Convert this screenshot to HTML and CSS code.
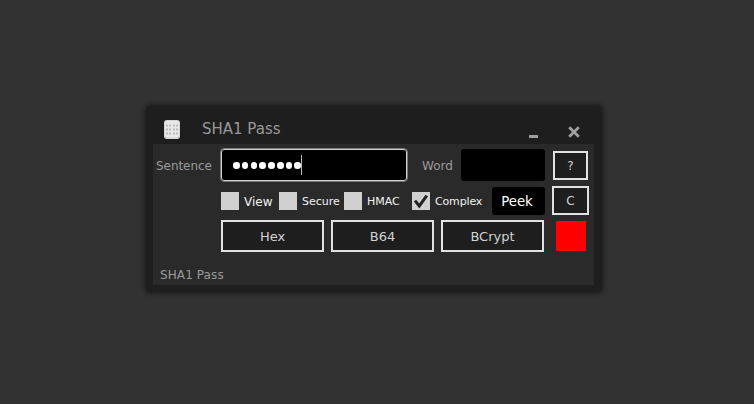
FILE: index.html
```
<!DOCTYPE html>
<html lang="en">
<head>
<meta charset="utf-8">
<title>SHA1 Pass</title>
<link rel="stylesheet" href="styles.css">
</head>
<body>
<main class="window">
  <header class="titlebar">
    <svg class="logo" width="16" height="19" viewBox="0 0 16 19">
      <rect x="0" y="0" width="16" height="19" rx="3" fill="#d4d4d4"/>
      <rect x="1" y="1" width="14" height="16.5" rx="2" fill="#e8e8e8"/>
      <path d="M2 5.5h5M9 5.5h5M2 9.5h5M9 9.5h5M2 13.5h5M9 13.5h5" stroke="#bcbcbc" stroke-width="2" stroke-dasharray="2 1"/>
    </svg>
    <h1 class="title"><span>SHA1 Pass</span></h1>
    <svg class="minimize" width="9" height="3" viewBox="0 0 9 3"><rect width="9" height="3" rx=".5" fill="#a0a0a0"/></svg>
    <svg class="close" width="12" height="12" viewBox="0 0 12 12"><path d="M1.2 1.2l9.6 9.6M10.8 1.2L1.2 10.8" stroke="#a0a0a0" stroke-width="2.7"/></svg>
  </header>
  <section class="content">
    <div class="row row-fields">
      <label class="label sentence-label"><span>Sentence</span></label>
      <div class="sentence">
        <span class="dots"><i></i><i></i><i></i><i></i><i></i><i></i><i></i><i></i></span><span class="caret"></span>
      </div>
      <label class="label word-label"><span>Word</span></label>
      <div class="word"></div>
      <button class="button help">?</button>
    </div>
    <div class="row row-options">
      <label class="option view"><span class="box"></span><span class="name">View</span></label>
      <label class="option secure"><span class="box"></span><span class="name">Secure</span></label>
      <label class="option hmac"><span class="box"></span><span class="name">HMAC</span></label>
      <label class="option complex"><span class="box"><svg width="18" height="18" viewBox="0 0 18 18"><path d="M3 8.6L7.3 14L14.8 3.6" fill="none" stroke="#222" stroke-width="3"/></svg></span><span class="name">Complex</span></label>
      <button class="peek"><span>Peek</span></button>
      <button class="button clear">C</button>
    </div>
    <div class="row row-actions">
      <button class="button action"><span class="hex">Hex</span></button>
      <button class="button action"><span class="b64">B64</span></button>
      <button class="button action"><span class="bcrypt">BCrypt</span></button>
      <div class="swatch"></div>
    </div>
    <footer class="status"><span>SHA1 Pass</span></footer>
  </section>
</main>
</body>
</html>
```
FILE: styles.css
```
* { box-sizing: border-box; }
body {
  margin: 0;
  height: 404px;
  padding: 106px 0 0 146px;
  background: #323232;
  font-family: "DejaVu Sans", Verdana, sans-serif;
  overflow: hidden;
}
.window {
  width: 456px;
  height: 186px;
  padding: 0 8px 7px 7px;
  background: #1e1e1e;
  border-radius: 4px;
  box-shadow: 0 0 5px 1px #181818;
}
.titlebar { display: flex; height: 38px; padding: 14px 14px 0 11px; }
.title { margin: -1px 0 0 22px; width: 326px; font-size: 15px; line-height: 20px; font-weight: 400; color: #989898; letter-spacing: 0; white-space: nowrap; }
.minimize { margin-top: 15px; margin-left: 1px; }
.close { margin: 6px 0 0 auto; }
.content { height: 141px; padding-top: 5px; background: #2a2a2a; }
.row { display: flex; white-space: nowrap; }
.row-fields { height: 32px; padding-left: 3px; }
.label { font-size: 12px; line-height: 34px; color: #9a9a9a; }
.sentence-label { width: 65px; letter-spacing: -.05px; }
.sentence { display: flex; align-items: center; width: 186px; height: 32px; padding-left: 11px; background: #000; border: 1px solid #d0d0d0; border-radius: 3px; outline: .5px solid #777; }
.dots { display: flex; gap: 2.2px; margin-top: 1px; }
.dots i { width: 6.6px; height: 6.6px; border-radius: 50%; background: #fff; }
.caret { width: 1px; height: 20px; margin-top: -1px; background: #b8b8b8; }
.word-label { width: 39px; margin-left: 15px; }
.word { width: 84px; height: 32px; background: #000; border-radius: 3px; }
.button { padding: 0; border: 2px solid #e2e2e2; background: #1e1e1e; color: #d2d2d2; font: 13px "DejaVu Sans", Verdana, sans-serif; }
.help { width: 35px; height: 29px; margin: 2px 0 0 8px; font-size: 12px; }
.row-options { height: 29px; margin-top: 5px; padding-left: 68px; }
.option { display: flex; height: 18px; margin-top: 6px; font-size: 11px; line-height: 20px; color: #f2f2f2; }
.box { width: 18px; height: 18px; background: #d0d0d0; }
.box svg { display: block; }
.name { margin-left: 5px; }
.view { width: 58px; font-size: 12px; }
.secure { width: 65px; }
.hmac { width: 68px; }
.complex { width: 80px; letter-spacing: -.15px; }
.peek { width: 53px; height: 28px; margin-top: 1px; padding: 0 3px 0 0; border: 0; border-radius: 3px; background: #000; color: #fff; font: 13.3px "DejaVu Sans", Verdana, sans-serif; }
.clear { width: 37px; margin-left: 7px; font-size: 12px; }
.row-actions { height: 32px; margin-top: 5px; padding-left: 68px; gap: 7px; }
.action { width: 103px; height: 32px; }
.swatch { width: 30px; height: 30px; margin: 1px 0 0 5px; background: #f00; }
.status { padding: 15px 0 0 7px; font-size: 12px; line-height: 16px; color: #9a9a9a; letter-spacing: .1px; }
```
